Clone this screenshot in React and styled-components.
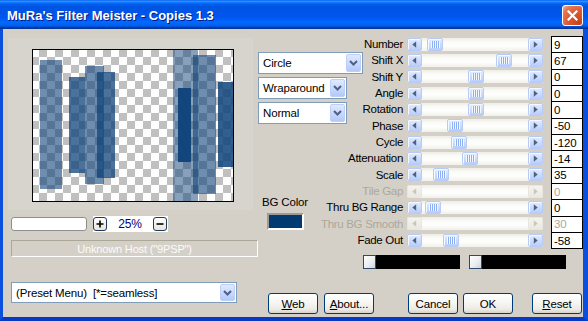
import React from "react";
import styled, { createGlobalStyle, css } from "styled-components";

const GlobalStyle = createGlobalStyle`
  html, body { margin: 0; padding: 0; background: #d4d0c8; }
  body { font-family: "Liberation Sans", Arial, sans-serif; }
`;

const Window = styled.div`
  width: 588px;
  height: 321px;
  display: flex;
  flex-direction: column;
  overflow: hidden;
  font-family: "Liberation Sans", Arial, sans-serif;
  font-size: 11px;
  letter-spacing: -0.15px;
  color: #000;
`;

const TitleBar = styled.div`
  flex: none;
  height: 29px;
  box-sizing: border-box;
  padding: 2px 5px 0 7px;
  display: flex;
  align-items: center;
  justify-content: space-between;
  background: linear-gradient(
    to bottom,
    #0058ee 0%,
    #3593ff 4%,
    #288eff 6%,
    #127dff 8%,
    #036ffc 10%,
    #0262ee 14%,
    #0057e5 20%,
    #0054e3 24%,
    #0055eb 56%,
    #005bf5 66%,
    #026afe 76%,
    #0062ef 86%,
    #0052d6 92%,
    #0040ab 94%,
    #003092 100%
  );
`;

const Title = styled.span`
  font-size: 13px;
  font-weight: bold;
  letter-spacing: 0;
  color: #fff;
  text-shadow: 1px 1px 0 #0a1883;
  white-space: nowrap;
`;

const CloseButton = styled.div`
  width: 21px;
  height: 21px;
  box-sizing: border-box;
  border: 1px solid #fff;
  border-radius: 3px;
  display: flex;
  align-items: center;
  justify-content: center;
  background: radial-gradient(
    circle at 85% 85%,
    #c94414 0%,
    #dd5a35 50%,
    #e77a58 80%,
    #f6b9a4 100%
  );
`;

const Frame = styled.div`
  flex: 1;
  display: flex;
  border-left: 3px solid #0b4fdf;
  border-right: 5px solid #0b4fdf;
  border-bottom: 4px solid #0838c6;
`;

const Client = styled.div`
  flex: 1;
  display: flex;
  background: #d4d0c8;
  padding-left: 8px;
`;

/* ---------- left column: preview, zoom, host, presets ---------- */

const LeftCol = styled.div`
  width: 247px;
  flex: none;
  display: flex;
  flex-direction: column;
  padding-top: 9px;
`;

const PreviewPanel = styled.div`
  margin-left: -3px;
  width: 245px;
  height: 172px;
  box-sizing: border-box;
  padding: 11px 0 0 24px;
  background: #d7d4cd;
`;

const Preview = styled.div`
  width: 202px;
  height: 153px;
  box-sizing: border-box;
  border: 1px solid #000;
  line-height: 0;
  svg { display: block; }
`;

const ZoomRow = styled.div`
  margin-top: 6px;
  height: 16px;
  display: flex;
  align-items: center;
`;

const NameField = styled.div`
  width: 76px;
  height: 14px;
  box-sizing: border-box;
  background: #fff;
  border: 1px solid #8f8f8f;
  border-radius: 3px;
`;

const ZoomBox = styled.div`
  margin-left: 6px;
  width: 75px;
  height: 16px;
  box-sizing: border-box;
  padding-right: 1px;
  background: #fff;
  display: flex;
  align-items: center;
  justify-content: space-between;
`;

const StepButton = styled.div`
  width: 14px;
  height: 14px;
  box-sizing: border-box;
  border: 1px solid #1e3a5c;
  border-radius: 3px;
  background: linear-gradient(to bottom, #ffffff, #e6e4dc);
  display: flex;
  align-items: center;
  justify-content: center;
`;

const ZoomValue = styled.span`
  font-size: 12px;
  color: #000080;
`;

const HostBox = styled.div`
  margin-top: 8px;
  height: 17px;
  box-sizing: border-box;
  border: 1px solid;
  border-color: #aca899 #fff #fff #aca899;
  color: #fbfbfb;
  display: flex;
  align-items: center;
  justify-content: center;
`;

/* ---------- combo boxes ---------- */

const Combo = styled.div`
  width: ${(p) => p.$w}px;
  height: ${(p) => p.$h || 22}px;
  box-sizing: border-box;
  border: 1px solid #7f9db9;
  background: #fff;
  display: flex;
  align-items: center;
  padding: 0 1px 0 4px;
  font-size: 11.5px;
  white-space: nowrap;
`;

const ComboText = styled.span`
  flex: 1;
`;

const DropButton = styled.div`
  width: 15px;
  height: calc(100% - 2px);
  box-sizing: border-box;
  border: 1px solid #bccffb;
  border-radius: 2px;
  background: linear-gradient(to bottom, #e0eafe 0%, #c6d6fc 60%, #b4c9f8 100%);
  display: flex;
  align-items: center;
  justify-content: center;
`;

const PresetCombo = styled(Combo)`
  margin-top: 25px;
`;

/* ---------- right area ---------- */

const RightArea = styled.div`
  flex: 1;
  display: flex;
  flex-direction: column;
`;

const TopRow = styled.div`
  display: flex;
  padding-top: 7px;
`;

const MidCol = styled.div`
  width: 105px;
  flex: none;
  display: flex;
  flex-direction: column;
  align-items: flex-start;
  gap: 3px;
  padding-top: 16px;
`;

const ColorGroup = styled.div`
  margin-top: 69px;
  width: 54px;
  display: flex;
  flex-direction: column;
  align-items: center;
  gap: 4px;
`;

const ColorLabel = styled.span`
  font-size: 11.5px;
  line-height: 13px;
`;

const Swatch = styled.div`
  width: 37px;
  height: 17px;
  box-sizing: border-box;
  border: 2px solid;
  border-color: #9d9a8e #fff #fff #9d9a8e;
  background: #003a70;
`;

const SlidersPane = styled.div`
  flex: 1;
  display: flex;
  flex-direction: column;
`;

const SliderRow = styled.div`
  height: 16.33px;
  display: flex;
  align-items: center;
`;

const Label = styled.div`
  width: 40px;
  margin-right: 4px;
  display: flex;
  justify-content: flex-end;
  white-space: nowrap;
  font-size: 11.5px;
  letter-spacing: -0.3px;
  color: ${(p) => (p.$disabled ? "#aca899" : "#000")};
`;

const Track = styled.div`
  position: relative;
  width: 136px;
  height: 13px;
  display: flex;
  justify-content: space-between;
  border-radius: 2px;
  background: linear-gradient(
    to bottom,
    #eeede5 0%,
    #fbfbf8 30%,
    #fefefe 60%,
    #f1f0ea 100%
  );
`;

const blueFace = css`
  border: 1px solid #b7cbf7;
  border-radius: 2px;
  background: linear-gradient(to bottom, #e3ecfe 0%, #cddcfc 50%, #b9cdf9 100%);
  box-shadow: inset 1px 1px 0 #f4f8ff;
`;

const ArrowButton = styled.div`
  width: 15px;
  height: 13px;
  box-sizing: border-box;
  display: flex;
  align-items: center;
  justify-content: center;
  ${(p) =>
    p.$disabled
      ? css`
          border: 1px solid #e8e6dd;
          border-radius: 2px;
          background: linear-gradient(to bottom, #f4f3ee, #e9e8e1);
        `
      : blueFace}
`;

const Thumb = styled.div`
  position: absolute;
  top: 0;
  width: 16px;
  height: 13px;
  box-sizing: border-box;
  display: flex;
  align-items: center;
  justify-content: center;
  ${blueFace}
`;

const Grip = styled.span`
  width: 9px;
  height: 7px;
  background: repeating-linear-gradient(
    to right,
    #f4f8ff 0 1px,
    #8caef2 1px 2px
  );
`;

const ValueBox = styled.div`
  align-self: stretch;
  margin-left: 8px;
  margin-bottom: -1px;
  width: 32px;
  box-sizing: border-box;
  border: 1px solid #000;
  background: #fff;
  padding-left: 2px;
  display: flex;
  align-items: center;
  font-size: 11.5px;
  color: ${(p) => (p.$disabled ? "#aca899" : "#000")};
`;

const ColorBars = styled.div`
  margin-top: 7px;
  display: flex;
  gap: 9px;
`;

const ColorBar = styled.div`
  width: 97px;
  height: 14px;
  background: #000;
  display: flex;
`;

const ColorChip = styled.div`
  width: 13px;
  height: 14px;
  box-sizing: border-box;
  border: 1px solid #2a4a6e;
  background: linear-gradient(135deg, #ffffff 0%, #e9ecef 60%, #cdd3dc 100%);
`;

const ButtonRow = styled.div`
  margin-top: 24px;
  display: flex;
`;

const Button = styled.div`
  margin-left: ${(p) => p.$gap}px;
  width: 50px;
  height: 21px;
  box-sizing: border-box;
  border: 1px solid #003c74;
  border-radius: 3px;
  background: linear-gradient(
    to bottom,
    #ffffff 0%,
    #f6f6f3 45%,
    #ecebe5 80%,
    #d8d3c8 100%
  );
  display: flex;
  align-items: center;
  justify-content: center;
  font-size: 11.5px;
`;

/* ---------- drawings ---------- */

const LeftArrow = ({ color }) => (
  <svg width="7" height="7" viewBox="0 0 7 7">
    <polygon points="5.2,0.3 1.3,3.5 5.2,6.7" fill={color} />
  </svg>
);

const RightArrow = ({ color }) => (
  <svg width="7" height="7" viewBox="0 0 7 7">
    <polygon points="1.8,0.3 5.7,3.5 1.8,6.7" fill={color} />
  </svg>
);

const Chevron = () => (
  <svg width="9" height="6" viewBox="0 0 9 6">
    <polyline
      points="1,1 4.5,4.5 8,1"
      fill="none"
      stroke="#4d6185"
      strokeWidth="2"
    />
  </svg>
);

const CloseGlyph = () => (
  <svg width="11" height="11" viewBox="0 0 11 11">
    <path d="M1.5 1.5 L9.5 9.5 M9.5 1.5 L1.5 9.5" stroke="#fff" strokeWidth="2.2" strokeLinecap="square" />
  </svg>
);

const PlusGlyph = () => (
  <svg width="8" height="8" viewBox="0 0 8 8">
    <path d="M4 0.5 V7.5 M0.5 4 H7.5" stroke="#000" strokeWidth="1.6" />
  </svg>
);

const MinusGlyph = () => (
  <svg width="8" height="8" viewBox="0 0 8 8">
    <path d="M0.5 4 H7.5" stroke="#000" strokeWidth="1.6" />
  </svg>
);

// copies of a bar, laid over a transparency grid
const copies = [
  { x: 7, y: 10, w: 22, h: 129, o: 0.6 },
  { x: 36, y: 27, w: 16, h: 96, o: 0.75 },
  { x: 52, y: 16, w: 19, h: 118, o: 0.6 },
  { x: 64, y: 22, w: 18, h: 106, o: 0.75 },
  { x: 140, y: 0, w: 25, h: 151, o: 0.5 },
  { x: 160, y: 5, w: 23, h: 139, o: 0.6 },
  { x: 145, y: 38, w: 13, h: 74, o: 0.97 },
  { x: 185, y: 32, w: 15, h: 85, o: 0.85 },
];

const PreviewImage = () => (
  <svg width="200" height="151" viewBox="0 0 200 151">
    <defs>
      <pattern id="checks" x="-2" y="-1" width="16" height="16" patternUnits="userSpaceOnUse">
        <rect width="16" height="16" fill="#fff" />
        <rect x="8" y="0" width="8" height="8" fill="#c0c0c0" />
        <rect x="0" y="8" width="8" height="8" fill="#c0c0c0" />
      </pattern>
    </defs>
    <rect width="200" height="151" fill="url(#checks)" />
    {copies.map((c, i) => (
      <rect key={i} x={c.x} y={c.y} width={c.w} height={c.h} fill="#0f437a" opacity={c.o} />
    ))}
  </svg>
);

const sliders = [
  { label: "Number", value: "9", at: 20 },
  { label: "Shift X", value: "67", at: 89 },
  { label: "Shift Y", value: "0", at: 61 },
  { label: "Angle", value: "0", at: 61 },
  { label: "Rotation", value: "0", at: 61 },
  { label: "Phase", value: "-50", at: 40 },
  { label: "Cycle", value: "-120", at: 44 },
  { label: "Attenuation", value: "-14", at: 55 },
  { label: "Scale", value: "35", at: 26 },
  { label: "Tile Gap", value: "0", disabled: true },
  { label: "Thru BG Range", value: "0", at: 18 },
  { label: "Thru BG Smooth", value: "30", disabled: true },
  { label: "Fade Out", value: "-58", at: 36 },
];

const Slider = ({ label, value, at, disabled }) => {
  const glyph = disabled ? "#c9c7ba" : "#4d6185";
  return (
    <SliderRow>
      <Label $disabled={disabled}>{label}</Label>
      <Track>
        <ArrowButton $disabled={disabled}>
          <LeftArrow color={glyph} />
        </ArrowButton>
        {!disabled && (
          <Thumb style={{ left: at }}>
            <Grip />
          </Thumb>
        )}
        <ArrowButton $disabled={disabled}>
          <RightArrow color={glyph} />
        </ArrowButton>
      </Track>
      <ValueBox $disabled={disabled}>{value}</ValueBox>
    </SliderRow>
  );
};

const ComboBox = ({ children, w, h, as: Wrap = Combo }) => (
  <Wrap $w={w} $h={h}>
    <ComboText>{children}</ComboText>
    <DropButton>
      <Chevron />
    </DropButton>
  </Wrap>
);

export default function App() {
  return (
    <>
      <GlobalStyle />
      <Window>
        <TitleBar>
          <Title>MuRa's Filter Meister - Copies 1.3</Title>
          <CloseButton>
            <CloseGlyph />
          </CloseButton>
        </TitleBar>
        <Frame>
          <Client>
            <LeftCol>
              <PreviewPanel>
                <Preview>
                  <PreviewImage />
                </Preview>
              </PreviewPanel>
              <ZoomRow>
                <NameField />
                <ZoomBox>
                  <StepButton>
                    <PlusGlyph />
                  </StepButton>
                  <ZoomValue>25%</ZoomValue>
                  <StepButton>
                    <MinusGlyph />
                  </StepButton>
                </ZoomBox>
              </ZoomRow>
              <HostBox>Unknown Host ("9PSP")</HostBox>
              <ComboBox as={PresetCombo} w={226} h={21}>
                (Preset Menu)&nbsp; [*=seamless]
              </ComboBox>
            </LeftCol>
            <RightArea>
              <TopRow>
                <MidCol>
                  <ComboBox w={105}>Circle</ComboBox>
                  <ComboBox w={89}>Wraparound</ComboBox>
                  <ComboBox w={89}>Normal</ComboBox>
                  <ColorGroup>
                    <ColorLabel>BG Color</ColorLabel>
                    <Swatch />
                  </ColorGroup>
                </MidCol>
                <SlidersPane>
                  {sliders.map((s) => (
                    <Slider key={s.label} {...s} />
                  ))}
                  <ColorBars>
                    <ColorBar>
                      <ColorChip />
                    </ColorBar>
                    <ColorBar>
                      <ColorChip />
                    </ColorBar>
                  </ColorBars>
                </SlidersPane>
              </TopRow>
              <ButtonRow>
                <Button $gap={10}>
                  <span><u>W</u>eb</span>
                </Button>
                <Button $gap={6}>
                  <span><u>A</u>bout...</span>
                </Button>
                <Button $gap={34}>Cancel</Button>
                <Button $gap={5}>OK</Button>
                <Button $gap={19}>
                  <span><u>R</u>eset</span>
                </Button>
              </ButtonRow>
            </RightArea>
          </Client>
        </Frame>
      </Window>
    </>
  );
}
